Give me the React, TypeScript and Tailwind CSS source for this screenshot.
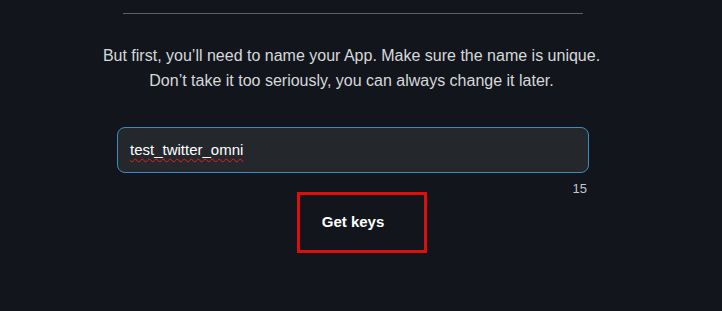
export default function App() {
  return (
    <div className="w-[722px] h-[311px] bg-[#12161c] overflow-hidden flex flex-col items-start" style={{ fontFamily: '"Liberation Sans", Arial, sans-serif' }}>
      <div className="mt-[13px] ml-[123px] w-[460px] h-px bg-[#5b6168]" />
      <div className="mt-[29px] self-center ml-[-19px] text-center text-[16px] leading-[25px] text-[#d6d9db]">
        <p>But first, you’ll need to name your App. Make sure the name is unique.</p>
        <p>Don’t take it too seriously, you can always change it later.</p>
      </div>
      <div className="mt-[34px] ml-[117px] w-[472px] flex flex-col">
        <div className="h-[46px] rounded-[8px] border border-[#3a8cc4] bg-[#24282d] flex items-center px-[12px]">
          <span className="text-[15px] text-white underline decoration-wavy decoration-[#d22] decoration-1 underline-offset-[3px]">test_twitter_omni</span>
        </div>
        <div className="self-end mr-[2px] mt-[8px] text-[13px] leading-[15px] text-[#c4c8cc]">15</div>
      </div>
      <div className="mt-[-4px] ml-[297px] w-[130px] h-[61px] border-[3px] border-[#e00d0d] flex items-center justify-center">
        <span className="text-[15px] font-bold text-white pr-[18px]">Get keys</span>
      </div>
    </div>
  );
}
